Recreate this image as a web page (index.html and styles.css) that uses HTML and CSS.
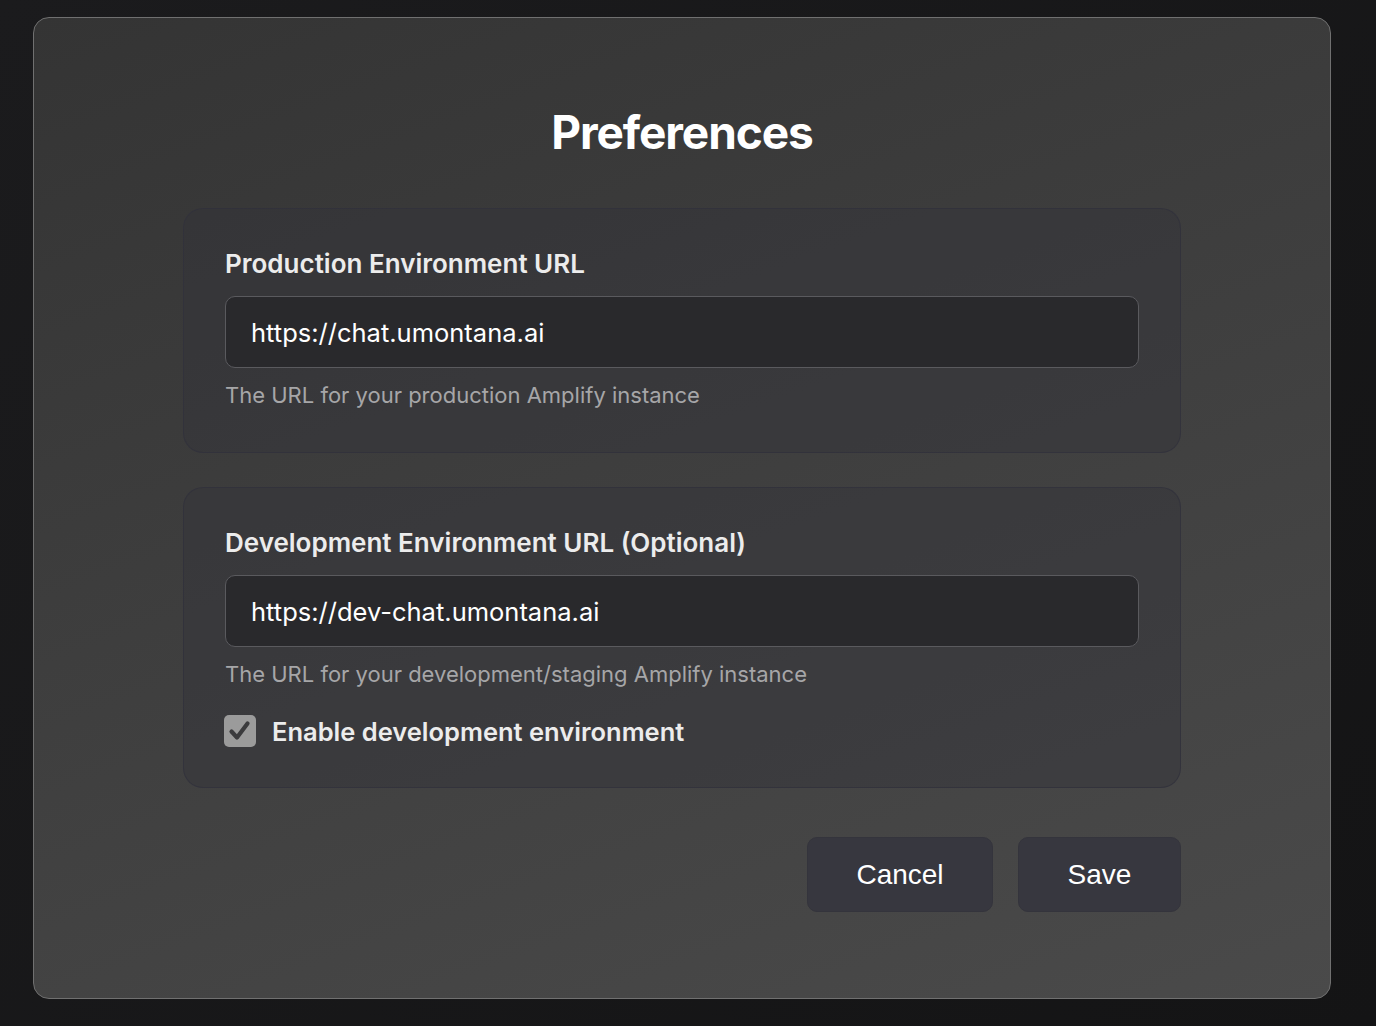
FILE: index.html
```html
<!DOCTYPE html>
<html lang="en">
<head>
<meta charset="utf-8">
<title>Preferences</title>
<link rel="stylesheet" href="styles.css">
</head>
<body>
<div class="window">
  <h1 class="title">Preferences</h1>
  <section class="card">
    <label class="field-label">Production Environment URL</label>
    <div class="input">https://chat.umontana.ai</div>
    <p class="help">The URL for your production Amplify instance</p>
  </section>
  <section class="card card-dev">
    <label class="field-label">Development Environment URL (Optional)</label>
    <div class="input">https://dev-chat.umontana.ai</div>
    <p class="help">The URL for your development/staging Amplify instance</p>
    <div class="check-row">
      <span class="checkbox">
        <svg viewBox="0 0 32 32" width="32" height="32"><path d="M7.5 16.5 L13 22.5 L23.5 8.5" fill="none" stroke="#3b3b3d" stroke-width="4.2" stroke-linecap="round" stroke-linejoin="round"/></svg>
      </span>
      <span class="check-label">Enable development environment</span>
    </div>
  </section>
  <div class="actions">
    <button class="btn">Cancel</button>
    <button class="btn btn-save">Save</button>
  </div>
</div>
</body>
</html>
```
FILE: styles.css
```css
html, body {
  margin: 0;
  padding: 0;
}
body {
  width: 1376px;
  height: 1026px;
  background: linear-gradient(135deg, #1b1b1d 0%, #141415 100%);
  font-family: "Inter", "Noto Sans", sans-serif;
  overflow: hidden;
}
.window {
  box-sizing: border-box;
  margin: 17px 0 0 33px;
  width: 1298px;
  height: 982px;
  border: 1.5px solid #707070;
  border-radius: 16px;
  background: linear-gradient(160deg, #343434 0%, #3e3e3e 45%, #4a4a4a 100%);
  display: flex;
  flex-direction: column;
  align-items: center;
  padding-top: 85px;
}
.title {
  margin: 0;
  color: #ffffff;
  font-size: 46px;
  font-weight: 700;
  line-height: 58px;
  letter-spacing: -1.1px;
}
.card {
  box-sizing: border-box;
  width: 998px;
  margin-top: 47px;
  padding: 40px 41px 44px;
  border: 1px solid rgba(50, 50, 60, 0.75);
  border-radius: 20px;
  background: rgba(52, 52, 58, 0.45);
  display: flex;
  flex-direction: column;
}
.card-dev {
  margin-top: 34px;
  padding-bottom: 40px;
}
.field-label {
  color: #ececec;
  font-size: 26px;
  font-weight: 600;
  line-height: 29px;
  display: block;
}
.input {
  box-sizing: border-box;
  margin-top: 18px;
  height: 72px;
  padding: 0 25px;
  border: 1.5px solid #5a5a5e;
  border-radius: 10px;
  background: #29292c;
  color: #ffffff;
  font-size: 25.5px;
  display: flex;
  align-items: center;
}
.help {
  margin: 15px 0 0;
  color: #a6a6a8;
  font-size: 22px;
  line-height: 25px;
}
.check-row {
  margin-top: 28px;
  display: flex;
  align-items: center;
  gap: 16px;
}
.checkbox {
  width: 32px;
  height: 32px;
  margin-left: -1px;
  border-radius: 5px;
  background: #9b9b9b;
  display: inline-flex;
}
.check-label {
  color: #ececec;
  font-size: 25.5px;
  font-weight: 600;
}
.actions {
  width: 998px;
  margin-top: 49px;
  display: flex;
  justify-content: flex-end;
  gap: 25px;
}
.btn {
  height: 75px;
  width: 186px;
  border: 1px solid #34343c;
  border-radius: 10px;
  background: #37373f;
  color: #ffffff;
  font-family: "Liberation Sans", Arial, sans-serif;
  font-size: 28px;
  padding: 0;
}
.btn-save {
  width: 163px;
}
```
